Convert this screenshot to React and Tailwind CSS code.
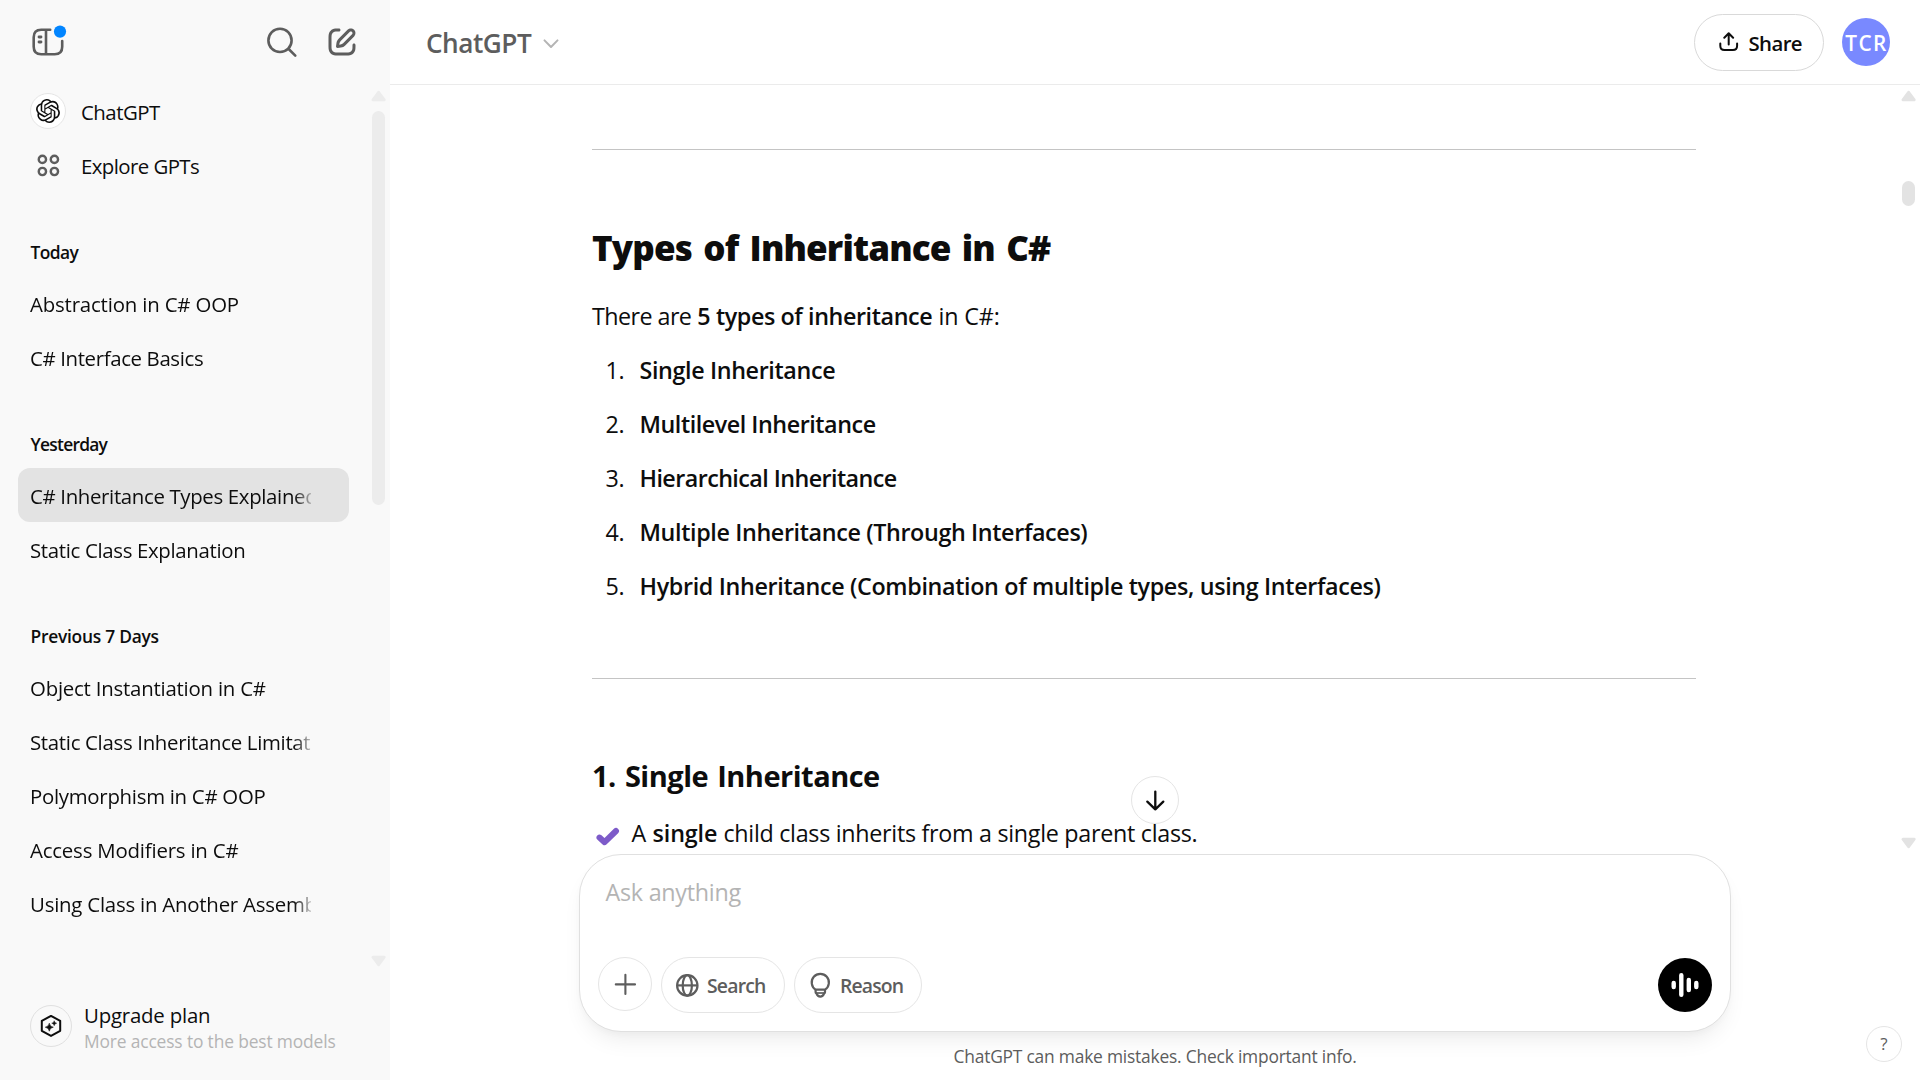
import React from "react";

const groups = [
  {
    title: "Today",
    titleClass: "tracking-[-0.6px]",
    items: [
      { text: "Abstraction in C# OOP", cls: "tracking-[-0.17px]" },
      { text: "C# Interface Basics", cls: "tracking-[-0.36px]" },
    ],
  },
  {
    title: "Yesterday",
    titleClass: "tracking-[-0.75px]",
    items: [
      { text: "C# Inheritance Types Explained", cls: "tracking-[-0.34px]", active: true },
      { text: "Static Class Explanation", cls: "tracking-[-0.33px]" },
    ],
  },
  {
    title: "Previous 7 Days",
    titleClass: "tracking-[-0.25px]",
    items: [
      { text: "Object Instantiation in C#", cls: "tracking-[-0.22px]" },
      { text: "Static Class Inheritance Limitations", cls: "tracking-[-0.31px]" },
      { text: "Polymorphism in C# OOP", cls: "tracking-[-0.28px]" },
      { text: "Access Modifiers in C#", cls: "tracking-[-0.19px]" },
      { text: "Using Class in Another Assembly", cls: "tracking-[-0.22px]" },
    ],
  },
];

const types = [
  { text: "Single Inheritance", cls: "tracking-[-0.36px]" },
  { text: "Multilevel Inheritance", cls: "tracking-[-0.45px]" },
  { text: "Hierarchical Inheritance", cls: "tracking-[-0.57px]" },
  { text: "Multiple Inheritance (Through Interfaces)", cls: "tracking-[-0.36px]" },
  {
    text: "Hybrid Inheritance (Combination of multiple types, using Interfaces)",
    cls: "tracking-[-0.335px]",
  },
];

function SidebarIcon() {
  return (
    <svg className="h-9 w-10 text-[#5d5d5d]" viewBox="30 24 40 36" fill="none" stroke="currentColor" strokeWidth="2.6" strokeLinecap="round">
      <path d="M50.2 29.7H41.2Q33.7 29.7 33.7 37.2V46.8Q33.7 54.3 41.2 54.3H54.7Q62.2 54.3 62.2 46.8V41" />
      <path d="M46 30V54" strokeLinecap="butt" />
      <path d="M39 37H41M39 42H41" strokeWidth="2.8" />
      <circle cx="60" cy="31.6" r="6.1" fill="#0285ff" stroke="none" />
    </svg>
  );
}

function SearchIcon() {
  return (
    <svg className="h-9 w-9 text-[#5d5d5d]" viewBox="264 24 36 36" fill="none" stroke="currentColor" strokeWidth="2.6" strokeLinecap="round">
      <circle cx="280" cy="40.4" r="11.6" />
      <path d="M288.4 48.8L295.3 55.6" />
    </svg>
  );
}

function EditIcon() {
  return (
    <svg className="h-9 w-9 text-[#5d5d5d]" viewBox="0 0 24 24" fill="currentColor">
      <path d="M15.6729 3.91287C16.8918 2.69392 18.8682 2.69392 20.0871 3.91287C21.3061 5.13182 21.3061 7.10813 20.0871 8.32708L14.1499 14.2643C13.3849 15.0293 12.3925 15.5255 11.3215 15.6785L9.14142 15.9899C8.82983 16.0344 8.51546 15.9297 8.29289 15.7071C8.07033 15.4845 7.96554 15.1701 8.01005 14.8586L8.32149 12.6785C8.47449 11.6075 8.97072 10.615 9.7357 9.85006L15.6729 3.91287ZM18.6729 5.32708C18.235 4.88918 17.525 4.88918 17.0871 5.32708L11.1499 11.2643C10.6909 11.7233 10.3932 12.3187 10.3014 12.9613L10.1785 13.8215L11.0386 13.6986C11.6812 13.6068 12.2767 13.3091 12.7357 12.8501L18.6729 6.91287C19.1108 6.47497 19.1108 5.76499 18.6729 5.32708ZM11 3.99929C11.0004 4.55157 10.5531 4.99963 10.0008 5.00007C9.00227 5.00084 8.29769 5.00827 7.74651 5.06064C7.20685 5.11191 6.88488 5.20117 6.63803 5.32695C6.07354 5.61457 5.6146 6.07351 5.32698 6.63799C5.19279 6.90135 5.10062 7.24904 5.05118 7.8542C5.00078 8.47105 5 9.26336 5 10.4V13.6C5 14.7366 5.00078 15.5289 5.05118 16.1457C5.10062 16.7509 5.19279 17.0986 5.32698 17.3619C5.6146 17.9264 6.07354 18.3854 6.63803 18.673C6.90138 18.8072 7.24907 18.8993 7.85424 18.9488C8.47108 18.9992 9.26339 19 10.4 19H13.6C14.7366 19 15.5289 18.9992 16.1458 18.9488C16.7509 18.8993 17.0986 18.8072 17.362 18.673C17.9265 18.3854 18.3854 17.9264 18.673 17.3619C18.7988 17.1151 18.8881 16.7931 18.9393 16.2535C18.9917 15.7023 18.9991 14.9977 18.9999 13.9992C19.0003 13.4469 19.4484 12.9995 20.0007 13C20.553 13.0004 21.0003 13.4485 20.9999 14.0007C20.9991 14.9789 20.9932 15.7808 20.9304 16.4426C20.8664 17.116 20.7385 17.7136 20.455 18.2699C19.9757 19.2107 19.2108 19.9756 18.27 20.455C17.6777 20.7568 17.0375 20.8826 16.3086 20.9421C15.6008 21 14.7266 21 13.6428 21H10.3572C9.27339 21 8.39925 21 7.69138 20.9421C6.96253 20.8826 6.32234 20.7568 5.73005 20.455C4.78924 19.9756 4.02433 19.2107 3.54497 18.2699C3.24318 17.6776 3.11737 17.0374 3.05782 16.3086C2.99998 15.6007 2.99999 14.7266 3 13.6428V10.3572C2.99999 9.27337 2.99998 8.39922 3.05782 7.69134C3.11737 6.96249 3.24318 6.3223 3.54497 5.73001C4.02433 4.7892 4.78924 4.0243 5.73005 3.54493C6.28633 3.26149 6.88399 3.13358 7.55735 3.06961C8.21919 3.00673 9.02103 3.00083 9.99922 3.00007C10.5515 2.99964 10.9996 3.447 11 3.99929Z" />
    </svg>
  );
}

function OpenAILogo() {
  return (
    <svg className="h-6 w-6 text-[#0d0d0d]" viewBox="0 0 24 24" fill="currentColor">
      <path d="M22.2819 9.8211a5.9847 5.9847 0 0 0-.5157-4.9108 6.0462 6.0462 0 0 0-6.5098-2.9A6.0651 6.0651 0 0 0 4.9807 4.1818a5.9847 5.9847 0 0 0-3.9977 2.9 6.0462 6.0462 0 0 0 .7427 7.0966 5.98 5.98 0 0 0 .511 4.9107 6.051 6.051 0 0 0 6.5146 2.9001A5.9847 5.9847 0 0 0 13.2599 24a6.0557 6.0557 0 0 0 5.7718-4.2058 5.9894 5.9894 0 0 0 3.9977-2.9001 6.0557 6.0557 0 0 0-.7475-7.0729zm-9.022 12.6081a4.4755 4.4755 0 0 1-2.8764-1.0408l.1419-.0804 4.7783-2.7582a.7948.7948 0 0 0 .3927-.6813v-6.7369l2.02 1.1686a.071.071 0 0 1 .038.052v5.5826a4.504 4.504 0 0 1-4.4945 4.4944zm-9.6607-4.1254a4.4708 4.4708 0 0 1-.5346-3.0137l.142.0852 4.783 2.7582a.7712.7712 0 0 0 .7806 0l5.8428-3.3685v2.3324a.0804.0804 0 0 1-.0332.0615L9.74 19.9502a4.4992 4.4992 0 0 1-6.1408-1.6464zM2.3408 7.8956a4.485 4.485 0 0 1 2.3655-1.9728V11.6a.7664.7664 0 0 0 .3879.6765l5.8144 3.3543-2.0201 1.1685a.0757.0757 0 0 1-.071 0l-4.8303-2.7865A4.504 4.504 0 0 1 2.3408 7.872zm16.5963 3.8558L13.1038 8.364 15.1192 7.2a.0757.0757 0 0 1 .071 0l4.8303 2.7913a4.4944 4.4944 0 0 1-.6765 8.1042v-5.6772a.79.79 0 0 0-.407-.667zm2.0107-3.0231l-.142-.0852-4.7735-2.7818a.7759.7759 0 0 0-.7854 0L9.409 9.2297V6.8974a.0662.0662 0 0 1 .0284-.0615l4.8303-2.7866a4.4992 4.4992 0 0 1 6.6802 4.66zM8.3065 12.863l-2.02-1.1638a.0804.0804 0 0 1-.038-.0567V6.0742a4.4992 4.4992 0 0 1 7.3757-3.4537l-.142.0805L8.704 5.459a.7948.7948 0 0 0-.3927.6813zm1.0976-2.3654l2.602-1.4998 2.6069 1.4998v2.9994l-2.5974 1.4997-2.6067-1.4997Z" />
    </svg>
  );
}

function GridIcon() {
  return (
    <svg className="h-6 w-6 text-[#5d5d5d]" viewBox="0 0 24 24" fill="none" stroke="currentColor" strokeWidth="2.4">
      <circle cx="6.4" cy="6.4" r="3.65" />
      <circle cx="18.4" cy="6.4" r="3.65" />
      <circle cx="6.4" cy="18.5" r="3.65" />
      <circle cx="18.4" cy="18.5" r="3.65" />
    </svg>
  );
}

function ArrowUp() {
  return (
    <svg className="h-[12px] w-[16px] shrink-0" viewBox="0 0 16 12" fill="currentColor" stroke="currentColor" strokeWidth="3" strokeLinejoin="round">
      <path d="M7.6 2.3L13.2 9.8H2Z" />
    </svg>
  );
}

function ArrowDown() {
  return (
    <svg className="h-[12px] w-[16px] shrink-0" viewBox="0 0 16 12" fill="currentColor" stroke="currentColor" strokeWidth="3" strokeLinejoin="round">
      <path d="M7.6 9.7L13.2 2.2H2Z" />
    </svg>
  );
}

function Sidebar() {
  return (
    <aside className="flex h-full w-[390px] shrink-0 flex-col bg-[#f9f9f9]">
      <div className="flex h-[84px] shrink-0 items-center pl-[30px] pr-[30px]">
        <SidebarIcon />
        <div className="ml-auto flex gap-6">
          <SearchIcon />
          <EditIcon />
        </div>
      </div>
      <div className="flex h-[888px] shrink-0">
        <nav className="flex w-[331px] ml-[18px] flex-col text-[20.4px] leading-[30px] text-[#0d0d0d]">
          <div className="flex h-[54px] items-center pl-3">
            <span className="flex size-9 items-center justify-center rounded-full border border-[#e5e5e5] bg-white">
              <OpenAILogo />
            </span>
            <span className="ml-[15px] pt-[2px] tracking-[-0.5px]">ChatGPT</span>
          </div>
          <div className="flex h-[54px] items-center pl-3">
            <span className="flex size-9 items-center justify-center">
              <GridIcon />
            </span>
            <span className="ml-[15px] pt-[2px] tracking-[-0.57px]">Explore GPTs</span>
          </div>
          {groups.map((g) => (
            <section key={g.title}>
              <h3 className={"h-[84px] pt-12 pl-[12.5px] text-[17.4px] leading-6 font-semibold " + g.titleClass}>{g.title}</h3>
              {g.items.map((it) => (
                <div
                  key={it.text}
                  className={
                    it.active
                      ? "flex h-[54px] items-center rounded-xl bg-[#e3e3e3] pl-3"
                      : "flex h-[54px] items-center pl-3"
                  }
                >
                  <span
                    className={
                      "w-[281px] overflow-hidden whitespace-nowrap pt-[2px] [mask-image:linear-gradient(to_right,#000_264px,transparent_286px)] " +
                      it.cls
                    }
                  >
                    {it.text}
                  </span>
                </div>
              ))}
            </section>
          ))}
        </nav>
        <div className="ml-auto flex w-5 flex-col items-center pr-[3px] pt-[6px] pb-[5px] text-[#ececec]">
          <ArrowUp />
          <div className="mt-[9px] h-[394px] w-[13px] rounded-full bg-[#ececec]" />
          <div className="mt-auto">
            <ArrowDown />
          </div>
        </div>
      </div>
      <div className="flex pl-[30px] pt-[30px]">
        <span className="mt-[3px] flex size-[42px] items-center justify-center rounded-full border border-[#e0e0e0]">
          <svg className="h-6 w-6 text-[#0d0d0d]" viewBox="0 0 24 24" fill="none" stroke="currentColor" strokeWidth="2" strokeLinejoin="round">
            <path d="M12 1.9L21.2 6.8V16.8L12 21.9L2.8 16.8V6.8Z" />
            <path d="M10.3 9.2Q10.8 12.7 14.3 13.2Q10.8 13.7 10.3 17.2Q9.8 13.7 6.3 13.2Q9.8 12.7 10.3 9.2Z" fill="currentColor" strokeWidth=".6" />
            <path d="M15.2 6.7Q15.5 8.9 17.7 9.2Q15.5 9.5 15.2 11.7Q14.9 9.5 12.7 9.2Q14.9 8.9 15.2 6.7Z" fill="currentColor" strokeWidth=".4" />
          </svg>
        </span>
        <div className="ml-3 flex flex-col">
          <span className="h-[27px] text-[20.4px] leading-[26px] tracking-[-0.2px] text-[#0d0d0d]">Upgrade plan</span>
          <span className="text-[17.4px] leading-[25px] tracking-[-0.15px] text-[#b4b4b4]">More access to the best models</span>
        </div>
      </div>
    </aside>
  );
}

function Header() {
  return (
    <header className="flex h-[85px] shrink-0 items-center border-b border-[#ebebeb] pr-[30px] pl-[36px]">
      <span className="pt-[2px] text-[26.2px] leading-[36px] font-semibold tracking-[-0.5px] text-[#5d5d5d]">ChatGPT</span>
      <svg className="ml-[11px] mt-[3px] h-[12px] w-[18px] text-[#b4b4b4]" viewBox="0 0 18 12" fill="none" stroke="currentColor" strokeWidth="2" strokeLinecap="round" strokeLinejoin="round">
        <path d="M2.5 2.4L9 9L15.5 2.4" />
      </svg>
      <button className="ml-auto flex h-[57px] w-[130px] items-center rounded-full border border-[#d9d9d9] pl-[23.5px] text-[#0d0d0d]">
        <svg className="h-5 w-5 shrink-0" viewBox="0 0 20 20" fill="none" stroke="currentColor" strokeWidth="2" strokeLinecap="round" strokeLinejoin="round">
          <path d="M1.3 11.6V13.8Q1.3 18 5.5 18H13.9Q18.1 18 18.1 13.8V11.6" />
          <path d="M9.7 12.4V1.8M5.3 5.7L9.7 1.3L14.1 5.7" />
        </svg>
        <span className="ml-[10px] pt-[1px] text-[20.4px] leading-[30px] font-semibold tracking-[-0.62px]">Share</span>
      </button>
      <span className="ml-[18px] flex size-12 items-center justify-center overflow-hidden rounded-full bg-[#7989ff] pt-[2px] pl-[1px] text-[20.8px] leading-[30px] font-semibold tracking-[1.4px] whitespace-nowrap text-white">
        TCR
      </span>
    </header>
  );
}

function Answer() {
  return (
    <article className="flex w-[1104px] flex-col text-[23.3px] leading-[42px] text-[#0d0d0d]">
      <hr className="mt-16 border-[#c4c4c4]" />
      <h2 className="mt-[74px] text-[35px] leading-[48px] font-extrabold tracking-[-0.85px] [word-spacing:3px]">Types of Inheritance in C#</h2>
      <p className="mt-[23px] whitespace-pre">
        <span className="tracking-[-0.56px]">There are </span>
        <strong className="ml-[0.5px] font-semibold tracking-[-0.4px]">5 types of inheritance</strong>
        <span className="ml-[0.5px] tracking-[-0.17px]"> in C#:</span>
      </p>
      <ol className="mt-3 flex flex-col gap-3">
        {types.map((t, i) => (
          <li key={t.text} className="flex">
            <span className="w-8 text-right tracking-[-0.5px]">{i + 1}.</span>
            <strong className={"ml-[15.5px] font-semibold " + t.cls}>{t.text}</strong>
          </li>
        ))}
      </ol>
      <hr className="mt-[71px] border-[#c4c4c4]" />
      <h3 className="mt-[76px] text-[29px] leading-[42px] font-bold tracking-[-0.5px] [word-spacing:2px]">1. Single Inheritance</h3>
      <p className="mt-[15px] flex whitespace-pre">
        <svg className="mt-3 ml-1 h-6 w-6 shrink-0" viewBox="0 0 24 24" fill="none" stroke="#7d5bc9" strokeWidth="6" strokeLinecap="round" strokeLinejoin="round">
          <path d="M3.5 13.6L8.6 18.2L20 7" />
        </svg>
        <span className="ml-[11.5px] tracking-[-0.1px]">A </span>
        <strong className="ml-[0.5px] font-semibold tracking-[-0.15px]">single</strong>
        <span className="ml-[0.5px] tracking-[-0.29px]"> child class inherits from a single parent class.</span>
      </p>
    </article>
  );
}

function Composer() {
  return (
    <div className="flex h-[178px] w-[1152px] shrink-0 flex-col rounded-[42px] border border-[#e0e0e0] bg-white pr-[18px] pl-[18px] shadow-[0_13px_24px_-8px_rgba(0,0,0,0.09),0_3px_6px_0_rgba(0,0,0,0.02)]">
      <div className="h-[102px] pl-[7.5px] pt-4 text-[23.3px] leading-[42px] tracking-[-0.25px] text-[#b4b4b4]">Ask anything</div>
      <div className="flex items-start text-[#5d5d5d]">
        <button className="flex size-[54px] items-center justify-center rounded-full border border-[#e5e5e5]">
          <svg className="h-6 w-6" viewBox="0 0 24 24" fill="none" stroke="currentColor" strokeWidth="2.1" strokeLinecap="round">
            <path d="M12.4 2.8V22M2.8 12.4H22" />
          </svg>
        </button>
        <button className="ml-[9px] flex h-14 w-[124px] items-center rounded-full border border-[#e5e5e5] pl-[13px]">
          <svg className="h-6 w-6 shrink-0" viewBox="0 0 24 24" fill="none" stroke="currentColor" strokeWidth="2.2">
            <circle cx="12.3" cy="12.4" r="10.2" />
            <ellipse cx="12.3" cy="12.4" rx="4.6" ry="10.2" />
            <path d="M2.1 12.4H22.5" />
          </svg>
          <span className="ml-2 pt-[1px] text-[19.4px] leading-[30px] font-semibold tracking-[-0.8px]">Search</span>
        </button>
        <button className="ml-[9px] flex h-14 w-[128px] items-center rounded-full border border-[#e5e5e5] pl-[13px]">
          <svg className="h-[26px] w-6 shrink-0" viewBox="0 0 24 26" fill="none" stroke="currentColor" strokeWidth="2.2" strokeLinejoin="round">
            <path d="M7.6 17.6A8.6 8.6 0 1 1 17 17.6Z" />
            <path d="M7.6 17.6V20.2Q7.6 21 8.4 21.4Q9.6 24.6 12.3 24.6Q15 24.6 16.2 21.4Q17 21 17 20.2V17.6" />
            <path d="M8 21H16.6" strokeWidth="1.7" />
          </svg>
          <span className="ml-[8px] pt-[1px] text-[19.4px] leading-[30px] font-semibold tracking-[-0.85px]">Reason</span>
        </button>
        <button className="mt-[1px] ml-auto flex size-[54px] items-center justify-center rounded-full bg-black">
          <svg className="h-7 w-7 text-white" viewBox="0 0 28 28" fill="none" stroke="currentColor" strokeWidth="4.4" strokeLinecap="round">
            <path d="M2.7 12V16M10.3 4.3V23.7M17.8 9V19M25.3 12V16" />
          </svg>
        </button>
      </div>
    </div>
  );
}

export default function App() {
  return (
    <div className="flex h-[1080px] w-[1920px] overflow-hidden bg-white font-['Open_Sans','Noto_Sans',sans-serif]">
      <Sidebar />
      <main className="relative flex min-w-0 flex-1 flex-col">
        <Header />
        <div className="flex h-[769px] shrink-0 pl-[202px]">
          <Answer />
          <div className="ml-auto flex w-5 flex-col items-center pr-[3px] pt-[5px] pb-[5px] text-[#e3e3e3]">
            <ArrowUp />
            <div className="mt-[79px] h-[25px] w-[13px] rounded-full bg-[#e3e3e3]" />
            <div className="mt-auto">
              <ArrowDown />
            </div>
          </div>
        </div>
        <button className="absolute top-[776px] left-[741px] flex size-12 items-center justify-center rounded-full border border-[#e5e5e5] bg-white text-[#0d0d0d]">
          <svg className="h-6 w-6" viewBox="0 0 24 24" fill="none" stroke="currentColor" strokeWidth="2.3" strokeLinecap="round" strokeLinejoin="round">
            <path d="M12.3 3.6V21.4M4.3 13.6L12.3 21.4L20.3 13.6" />
          </svg>
        </button>
        <div className="z-10 flex justify-center">
          <Composer />
        </div>
        <div className="flex h-12 items-start">
          <span className="ml-[563.5px] pt-[12px] text-[17.4px] leading-6 tracking-[-0.21px] whitespace-nowrap text-[#5d5d5d]">
            ChatGPT can make mistakes. Check important info.
          </span>
          <span className="mt-[-6px] mr-[18px] ml-auto flex size-9 items-center justify-center rounded-full border border-[#e5e5e5] text-[17px] text-[#5d5d5d]">
            ?
          </span>
        </div>
      </main>
    </div>
  );
}
